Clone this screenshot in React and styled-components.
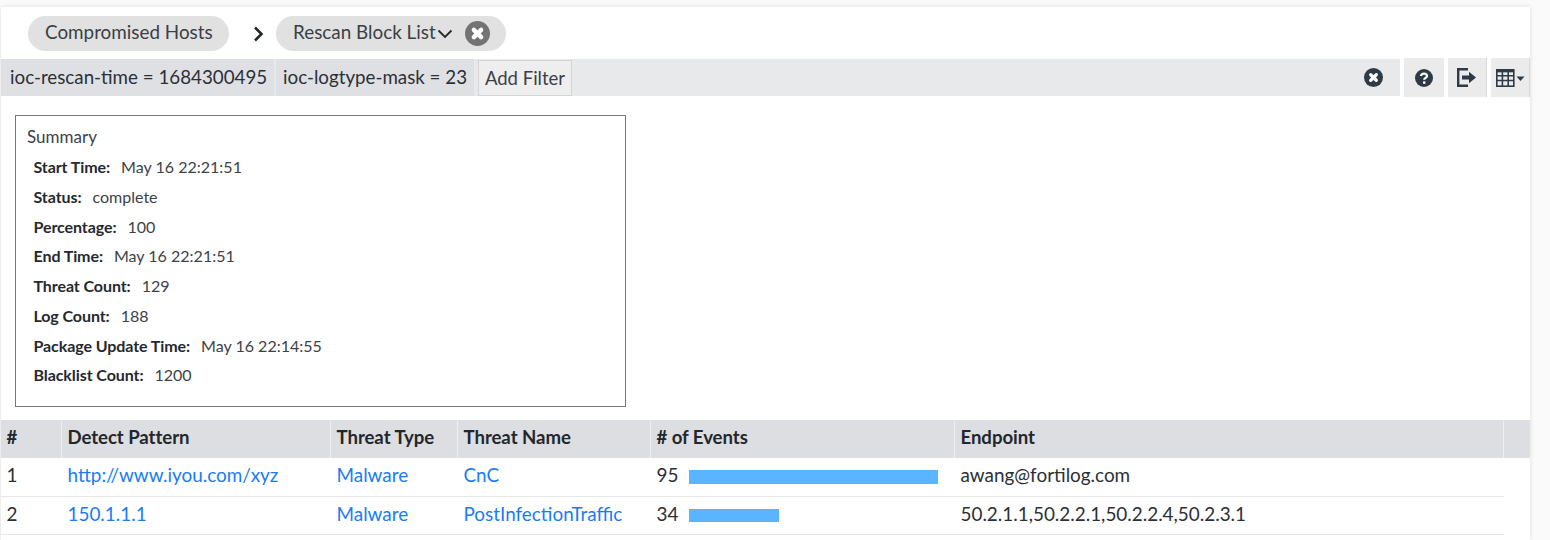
import React from "react";
import styled, { createGlobalStyle } from "styled-components";

const Global = createGlobalStyle`
  html, body { margin: 0; padding: 0; background: #fafafa; height: 540px; overflow: hidden; }
  body { font-family: Lato, "Open Sans", sans-serif; color: #22262b; }
`;
const Panel = styled.div`
  width: 1529px; height: 533px; margin: 7px 0 0 1px; background: #fff;
  box-shadow: 0 0 5px rgba(0,0,0,.12); overflow: hidden;
`;
const Crumbs = styled.div`
  height: 51px; display: flex; align-items: center; padding: 1px 0 0 27px; box-sizing: border-box;
`;
const Pill = styled.div`
  height: 35px; display: flex; align-items: center; background: #e1e1e1; border-radius: 18px;
  font-size: 18.85px; color: #3a3f45; padding: 0 16px 3px 17px; box-sizing: border-box;
  width: ${p => p.$w}px;
`;
const Sep = styled.div`
  width: 47px; display: flex; justify-content: center; padding: 2px 0 0 11px; box-sizing: border-box;
`;
const Caret = styled.svg`
  margin: 5px 0 0 1px;
`;
const Close = styled.span`
  width: 25px; height: 25px; margin: 3px 0 0 auto; display: flex;
`;
const Toolbar = styled.div`
  height: 39px; display: flex; align-items: center; gap: 4px;
`;
const FilterBar = styled.div`
  height: 37px; width: 1399px; background: #e8e9ea; display: flex; align-items: center; flex: none;
`;
const Chip = styled.div`
  height: 37px; background: #dfe0e4; display: flex; align-items: center; font-size: 18.75px; color: #2b3036;
  box-sizing: border-box; width: ${p => p.$w}px; padding: 0 0 3px ${p => p.$pl}px; margin-left: ${p => p.$ml || 0}px;
`;
const AddBtn = styled.div`
  height: 36px; width: 94px; margin-left: 4px; box-sizing: border-box; border: 1px solid #d3d4d6; background: #eeeeee;
  display: flex; align-items: center; justify-content: center; font-size: 18.5px; color: #3b4046;
`;
const ClearIcon = styled.span`
  margin-left: auto; margin-right: 17px; display: flex;
`;
const ToolBtn = styled.div`
  height: 39px; width: ${p => p.$w}px; background: #ebebeb; display: flex; align-items: center; justify-content: center;
  box-sizing: border-box; flex: none; border-right: ${p => p.$edge ? "1px solid #d8d8d8" : "none"};
`;
const SummaryBox = styled.div`
  width: 611px; height: 292px; margin: 18px 0 0 14px; border: 1px solid #777; box-sizing: border-box;
  padding: 10px 0 0 11px; font-size: 16.05px; color: #3d4248;
`;
const SummaryTitle = styled.div`
  height: 26px; line-height: 22px; font-size: 17px;
`;
const SummaryRow = styled.div`
  height: 29.75px; line-height: 29.75px; padding-left: 6.5px; white-space: nowrap;
  b { font-weight: 700; color: #25292e; margin-right: 11px; letter-spacing: -0.1px; }
`;
const Table = styled.div`
  margin-top: 13px;
`;
const cols = "61px 269px 127px 193px 304px 549px 26px";
const HeadRow = styled.div`
  display: grid; grid-template-columns: ${cols}; height: 38px; background: #dddee2;
`;
const HeadCell = styled.div`
  font-size: 18.6px; font-weight: 700; color: #23272c; line-height: 35px; padding-left: 5.5px;
  border-right: 1px solid #eeeff1; box-sizing: border-box; letter-spacing: -0.05px;
  &:last-child { border-right: 0; }
`;
const Row = styled.div`
  display: grid; grid-template-columns: ${cols.replace(" 26px", "")}; height: ${p => p.$h}px; width: 1503px;
  border-bottom: 1px solid #e8e8e8; box-sizing: border-box;
`;
const Cell = styled.div`
  font-size: 18.9px; color: #2b3036; line-height: 34px; padding-left: 5.5px; display: flex; align-items: flex-start; white-space: nowrap;
`;
const Link = styled.a`
  color: #1a7cf5; text-decoration: none;
`;
const Count = styled.span`
  width: 32.5px; flex: none;
`;
const Bar = styled.div`
  height: ${p => p.$h}px; background: #5ab4ff; margin-top: 12px;
`;

const X = ({ size, bg, fg }) => (
  <svg width={size} height={size} viewBox="0 0 24 24">
    <circle cx="12" cy="12" r="12" fill={bg} />
    <path d="M8.5 8.5 L15.5 15.5 M15.5 8.5 L8.5 15.5" stroke={fg} strokeWidth="4.2" strokeLinecap="round" />
  </svg>
);

const summary = [
  ["Start Time:", "May 16 22:21:51"],
  ["Status:", "complete"],
  ["Percentage:", "100"],
  ["End Time:", "May 16 22:21:51"],
  ["Threat Count:", "129"],
  ["Log Count:", "188"],
  ["Package Update Time:", "May 16 22:14:55"],
  ["Blacklist Count:", "1200"],
];
const rows = [
  { n: 1, p: "http://www.iyou.com/xyz", t: "Malware", name: "CnC", ev: 95, w: 249, rh: 39, h: 14, ep: "awang@fortilog.com" },
  { n: 2, p: "150.1.1.1", t: "Malware", name: "PostInfectionTraffic", ev: 34, w: 90, rh: 38, h: 13, ep: "50.2.1.1,50.2.2.1,50.2.2.4,50.2.3.1" },
];
const heads = ["#", "Detect Pattern", "Threat Type", "Threat Name", "# of Events", "Endpoint", ""];

export default function App() {
  return (
    <>
      <Global />
      <Panel>
        <Crumbs>
          <Pill $w={201}>Compromised Hosts</Pill>
          <Sep>
            <svg width="11" height="16" viewBox="0 0 11 16"><path d="M2 1.5 L8.5 8 L2 14.5" fill="none" stroke="#23272c" strokeWidth="2.6" /></svg>
          </Sep>
          <Pill $w={230}>
            Rescan Block List
            <Caret width="16" height="10" viewBox="0 0 16 10"><path d="M1.5 1.5 L8 8 L14.5 1.5" fill="none" stroke="#23272c" strokeWidth="1.8" /></Caret>
            <Close><X size={25} bg="#737373" fg="#fff" /></Close>
          </Pill>
        </Crumbs>
        <Toolbar>
          <FilterBar>
            <Chip $w={273} $pl={9}>ioc-rescan-time = 1684300495</Chip>
            <Chip $w={198} $pl={7} $ml={2}>ioc-logtype-mask = 23</Chip>
            <AddBtn>Add Filter</AddBtn>
            <ClearIcon><X size={19} bg="#2f3a47" fg="#fff" /></ClearIcon>
          </FilterBar>
          <ToolBtn $w={40}>
            <svg width="18" height="18" viewBox="0 0 18 18">
              <circle cx="9" cy="9" r="9" fill="#2f3a47" />
              <path d="M6 7 C6 3.8 12 3.8 12 7 C12 9 9.2 8.8 9.2 10.8" fill="none" stroke="#fff" strokeWidth="2.2" />
              <rect x="8" y="12.4" width="2.4" height="2.4" fill="#fff" />
            </svg>
          </ToolBtn>
          <ToolBtn $w={39} $edge>
            <svg width="20" height="19" viewBox="0 0 20 19">
              <path d="M11 1.2 H1.2 V17.8 H11" fill="none" stroke="#2f3a47" strokeWidth="2.4" />
              <path d="M5 7.5 H12 V3.8 L19 9.5 L12 15.2 V11.5 H5 Z" fill="#2f3a47" />
            </svg>
          </ToolBtn>
          <ToolBtn $w={39} $edge>
            <svg width="29" height="18" viewBox="0 0 29 18">
              <rect x="0.8" y="0.8" width="17" height="16.4" fill="none" stroke="#2f3a47" strokeWidth="1.6" />
              <path d="M0.8 2.5 H17.8 M0.8 6.8 H17.8 M0.8 11.5 H17.8 M6.4 1 V17 M12.2 1 V17" stroke="#2f3a47" strokeWidth="1.6" />
              <path d="M0.8 1.6 H17.8" stroke="#2f3a47" strokeWidth="3" />
              <path d="M20.5 7.5 H28.5 L24.5 12 Z" fill="#2f3a47" />
            </svg>
          </ToolBtn>
        </Toolbar>
        <SummaryBox>
          <SummaryTitle>Summary</SummaryTitle>
          {summary.map(([k, v]) => (
            <SummaryRow key={k}><b>{k}</b>{v}</SummaryRow>
          ))}
        </SummaryBox>
        <Table>
          <HeadRow>
            {heads.map((h, i) => <HeadCell key={i}>{h}</HeadCell>)}
          </HeadRow>
          {rows.map(r => (
            <Row key={r.n} $h={r.rh}>
              <Cell>{r.n}</Cell>
              <Cell><Link>{r.p}</Link></Cell>
              <Cell><Link>{r.t}</Link></Cell>
              <Cell><Link>{r.name}</Link></Cell>
              <Cell><Count>{r.ev}</Count><Bar $h={r.h} style={{ width: r.w }} /></Cell>
              <Cell>{r.ep}</Cell>
            </Row>
          ))}
        </Table>
      </Panel>
    </>
  );
}
